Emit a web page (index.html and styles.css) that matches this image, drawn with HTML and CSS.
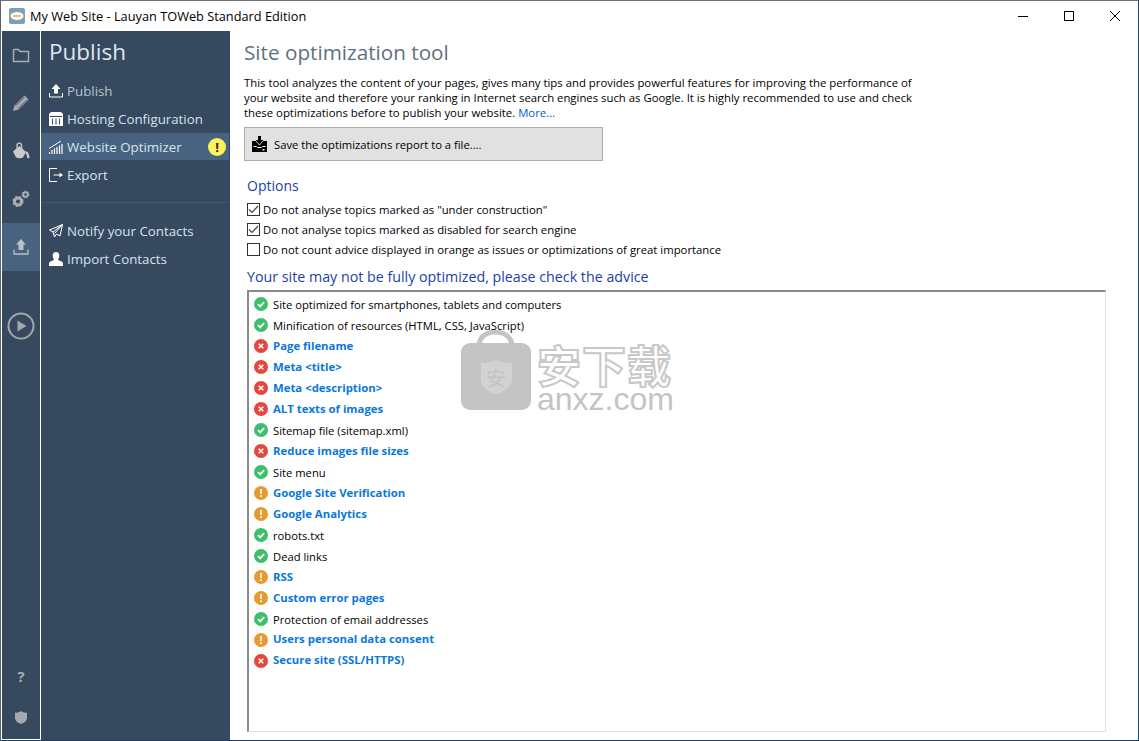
FILE: index.html
```html
<!DOCTYPE html>
<html>
<head>
	<meta charset="utf-8">
	<title>My Web Site - Lauyan TOWeb Standard Edition</title>
	<link rel="stylesheet" href="styles.css">
</head>
<body>
<div class="window">
	<div class="titlebar">
		<svg class="app-icon" width="16" height="16" viewBox="0 0 16 16"><rect width="16" height="16" rx="2" fill="#7d9fb5"/><ellipse cx="8" cy="8" rx="6.5" ry="4" fill="#fff"/><rect x="4" y="7" width="8" height="2" fill="#e8c25a"/></svg>
		<span class="title">My Web Site - Lauyan TOWeb Standard Edition</span>
		<div class="win-buttons">
			<svg width="12" height="12" viewBox="0 0 12 12"><path d="M1 6.5h10" stroke="#000" fill="none"/></svg>
			<svg width="12" height="12" viewBox="0 0 12 12"><rect x="1.5" y="1.5" width="9" height="9" stroke="#000" fill="none"/></svg>
			<svg width="12" height="12" viewBox="0 0 12 12"><path d="M1 1l10 10M11 1L1 11" stroke="#000" fill="none"/></svg>
		</div>
	</div>
	<div class="body">
		<div class="rail">
			<div class="rail-item">
				<svg width="18" height="16" viewBox="0 0 18 16"><path d="M1.5 3V14.500H16.500V4.500H8L6.500 2.500H2Z" fill="none" stroke="#a9adb2" stroke-width="1.500"/></svg>
			</div>
			<div class="rail-item">
				<svg width="18" height="18" viewBox="0 0 18 18"><path d="M1 17l1.500-5.500L12.500 1.500l4 4L6.500 15.500ZM3.500 12l2.500 2.500" fill="#a9adb2"/><path d="M3.500 12l9-9M6 14.500l9-9" stroke="#36495e" stroke-width=".8"/></svg>
			</div>
			<div class="rail-item">
				<svg width="18" height="18" viewBox="0 0 18 18"><path d="M1 9.500L7.500 4 14 10l-3 5.500c-2 1-5 1-7 0Z" fill="#c8cacc"/><path d="M5 6.500V3.500a2.300 2.300 0 0 1 4.600 0V8" fill="none" stroke="#c8cacc" stroke-width="1.300"/><path d="M14.500 9c2 1.500 3 4 3 6.500 0 1-2.500 1-2.500 0 0-2-.5-3-1.500-4.500Z" fill="#c8cacc"/></svg>
			</div>
			<div class="rail-item">
				<svg width="18" height="18" viewBox="0 0 18 18"><circle cx="6" cy="11.500" r="3.500" fill="none" stroke="#a9adb2" stroke-width="3"/><circle cx="6" cy="11.500" r="5" fill="none" stroke="#a9adb2" stroke-width="1.200" stroke-dasharray="2 2"/><circle cx="13.500" cy="4.500" r="2.300" fill="none" stroke="#a9adb2" stroke-width="2"/><circle cx="13.500" cy="4.500" r="3.500" fill="none" stroke="#a9adb2" stroke-width="1" stroke-dasharray="1.500 1.500"/></svg>
			</div>
			<div class="rail-item active">
				<svg width="16" height="16" viewBox="0 0 16 16"><path d="M8 0l5 5.500H10.500V11h-5V5.500H3Z" fill="#b9c0c7"/><path d="M1 10.500V15h14v-4.500" fill="none" stroke="#b9c0c7" stroke-width="1.300"/></svg>
			</div>
			<div class="rail-play">
				<svg width="28" height="28" viewBox="0 0 28 28"><circle cx="14" cy="14" r="12.500" fill="none" stroke="#a3a7ac" stroke-width="2"/><path d="M10.500 8.500v11l9-5.500Z" fill="#a3a7ac"/></svg>
			</div>
			<div class="rail-foot">
				<span class="help">?</span>
				<svg width="12" height="13" viewBox="0 0 12 13"><path d="M0 1.500c2 .5 4 0 6-1.500 2 1.500 4 2 6 1.500V7c0 3-3 5-6 6-3-1-6-3-6-6Z" fill="#a3a9af"/></svg>
			</div>
		</div>
		<div class="sidebar">
			<div class="side-title">Publish</div>
			<div class="side-item dim">
				<svg width="14" height="14" viewBox="0 0 14 14"><path d="M7 0l4.500 5H9v4.500H5V5H2.500Z" fill="#fff"/><path d="M.5 9v4h13V9" fill="none" stroke="#fff"/></svg>
				Publish
			</div>
			<div class="side-item">
				<svg width="14" height="14" viewBox="0 0 14 14"><path d="M2 0h10l2 2v12H0V2Z" fill="#fff"/><path d="M1 4.500h12M3.500 6.500v6M7 6.500v6M10.500 6.500v6" stroke="#36495e"/></svg>
				Hosting Configuration
			</div>
			<div class="side-item active">
				<svg width="14" height="14" viewBox="0 0 14 14"><path d="M.5 14v-2M3 14v-4M5.500 14V8.500M8 14V7M10.500 14V5.500M13 14V4" stroke="#fff" stroke-width="1.200" fill="none"/><path d="M0 8.500L8 3.500 12 1" stroke="#fff" fill="none"/></svg>
				Website Optimizer
				<span class="warn-badge">!</span>
			</div>
			<div class="side-item">
				<svg width="14" height="14" viewBox="0 0 14 14"><path d="M8 .5H.5v13H8M4.500 7H11" stroke="#fff" fill="none"/><path d="M10.500 4.500L14 7l-3.500 2.500Z" fill="#fff"/></svg>
				Export
			</div>
			<div class="side-sep"></div>
			<div class="side-item">
				<svg width="14" height="14" viewBox="0 0 14 14"><path d="M13.500.5L.5 6l3.500 2 1.500 5 2-3 3.500 2ZM4 8l9.500-7.500-8 9" stroke="#fff" fill="none"/></svg>
				Notify your Contacts
			</div>
			<div class="side-item">
				<svg width="14" height="14" viewBox="0 0 14 14"><path d="M7 0c2.200 0 3.300 1.700 3.300 3.800 0 1.500-.6 2.700-1.300 3.500 0 1 3 1.700 4.500 3 .5.500.5 2 .5 3.700H0c0-1.700 0-3.200.5-3.700C2 9 5 8.300 5 7.300c-.7-.8-1.300-2-1.300-3.500C3.700 1.700 4.800 0 7 0Z" fill="#fff"/></svg>
				Import Contacts
			</div>
		</div>
		<div class="main">
			<h1>Site optimization tool</h1>
			<p class="intro">This tool analyzes the content of your pages, gives many tips and provides powerful features for improving the performance of<br>your website and therefore your ranking in Internet search engines such as Google. It is highly recommended to use and check<br>these optimizations before to publish your website. <a>More...</a></p>
			<div class="save-btn">
				<svg width="15" height="16" viewBox="0 0 15 16"><path d="M0 5h3.500L7.500 9.500 11.500 5H15v11H0Z" fill="#000"/><path d="M6 0h3v4h2.500L7.500 8.500 3.500 4H6Z" fill="#000"/><path d="M1.500 10.500h3l1 1h4l1-1h3" stroke="#fff" fill="none"/><rect x="10.500" y="13" width="2" height="1.500" fill="#fff"/></svg>
				Save the optimizations report to a file....
			</div>
			<h2 class="options-head">Options</h2>
			<label class="check checked"><span class="box"><svg width="11" height="11" viewBox="0 0 11 11"><path d="M1 5.500l3 3L10 2" fill="none" stroke="#444" stroke-width="1.200"/></svg></span>Do not analyse topics marked as "under construction"</label>
			<label class="check checked"><span class="box"><svg width="11" height="11" viewBox="0 0 11 11"><path d="M1 5.500l3 3L10 2" fill="none" stroke="#444" stroke-width="1.200"/></svg></span>Do not analyse topics marked as disabled for search engine</label>
			<label class="check"><span class="box"></span>Do not count advice displayed in orange as issues or optimizations of great importance</label>
			<h2 class="advice-head">Your site may not be fully optimized, please check the advice</h2>
			<div class="advice-list" id="advice-list"></div>
		</div>
	</div>
	<div class="watermark">
		<svg width="70" height="80" viewBox="0 0 70 80"><path d="M18 16C18 7 25 2 34 2s17 5 17 14" fill="none" stroke="#c4c4c4" stroke-width="5"/><rect y="13" width="70" height="67" rx="9" fill="#c4c4c4"/><path d="M20 33c6 0 11-1 15-3 4 2 9 3 16 3v17c0 7-9 12-16 15-7-3-15-8-15-15Z" fill="#d2d2d2"/><text x="35" y="56" text-anchor="middle" font-size="20" font-family="Noto Sans CJK SC" fill="#c4c4c4">安</text></svg>
		<div class="wm-text">
			<div class="wm-cn">安下载</div>
			<div class="wm-en">anxz.com</div>
		</div>
	</div>
</div>
<script>
	// g = ok, r = error, o = warning
	var advice = [
		["g", "Site optimized for smartphones, tablets and computers"],
		["g", "Minification of resources (HTML, CSS, JavaScript)"],
		["r", "Page filename"],
		["r", "Meta <title>"],
		["r", "Meta <description>"],
		["r", "ALT texts of images"],
		["g", "Sitemap file (sitemap.xml)"],
		["r", "Reduce images file sizes"],
		["g", "Site menu"],
		["o", "Google Site Verification"],
		["o", "Google Analytics"],
		["g", "robots.txt"],
		["g", "Dead links"],
		["o", "RSS"],
		["o", "Custom error pages"],
		["g", "Protection of email addresses"],
		["o", "Users personal data consent"],
		["r", "Secure site (SSL/HTTPS)"]
	];
	var marks = {
		g: '<path d="M4 7.200l2.200 2.200L10.200 5" fill="none" stroke="#fff" stroke-width="1.800"/>',
		r: '<path d="M4.700 4.700l4.600 4.600M9.300 4.700l-4.600 4.600" fill="none" stroke="#fff" stroke-width="1.500"/>',
		o: '<path d="M7 3v5M7 9.300v1.700" fill="none" stroke="#fff" stroke-width="1.700"/>'
	};
	var $list = document.getElementById("advice-list");
	advice.forEach(function(entry) {
		var $row = document.createElement("div");
		$row.className = "advice advice-" + entry[0];
		$row.innerHTML = '<svg width="14" height="14" viewBox="0 0 14 14"><circle cx="7" cy="7" r="7"/>' + marks[entry[0]] + '</svg>';
		var $text = document.createElement("span");
		$text.textContent = entry[1];
		$row.appendChild($text);
		$list.appendChild($row);
	});
</script>
</body>
</html>
```

FILE: styles.css
```css
html, body { margin: 0; padding: 0; height: 100%; }
body { font: 11.300px "Open Sans", "Noto Sans", sans-serif; color: #000; background: #fff; overflow: hidden; }

.window { position: relative; display: flex; flex-direction: column; height: 741px; box-sizing: border-box; border: 1px solid #5c6670; border-top-color: #6b7177; border-bottom-color: #1f3d5c; border-right-color: #2b4560; }

.titlebar { display: flex; align-items: center; height: 30px; flex: none; padding-left: 8px; background: #fff; }
.app-icon { margin-right: 5px; }
.title { font-size: 12.780px; }
.win-buttons { display: flex; margin-left: auto; gap: 34px; padding-right: 17px; }

.body { display: flex; flex: 1; min-height: 0; }

.rail { display: flex; flex-direction: column; width: 38px; flex: none; margin-left: 1px; background: #36495e; border-right: 1px solid #fff; border-bottom: 1px solid #fff; }
.rail-item { display: flex; align-items: center; justify-content: center; height: 48px; }
.rail-item.active { background: #47637f; }
.rail-play { display: flex; justify-content: center; margin-top: 41px; }
.rail-foot { display: flex; flex-direction: column; align-items: center; gap: 26px; margin-top: auto; padding-bottom: 15px; }
.help { font-size: 15px; font-weight: bold; color: #a9adb2; line-height: 18px; }

.sidebar { width: 189px; flex: none; background: #36495e; color: #d5e3ee; }
.side-title { font-size: 22.500px; line-height: 32px; padding: 5px 0 9px 8px; color: #dce6ee; }
.side-item { display: flex; align-items: center; height: 28px; padding-left: 8px; font-size: 13.300px; box-sizing: border-box; }
.side-item svg { margin-right: 4px; flex: none; }
.side-item.dim { color: #b4c4d2; }
.side-item.active { background: #47637f; width: 188px; height: 27px; margin-bottom: 1px; }
.warn-badge { margin-left: auto; margin-right: 3px; width: 18px; height: 18px; border-radius: 50%; background: #fdf25a; color: #222; font-size: 13px; font-weight: bold; line-height: 18px; text-align: center; }
.side-sep { height: 1px; margin: 13px 0 14px; background: #45586d; }

.main { flex: 1; min-width: 0; padding: 6px 32px 0 14px; background: #fff; display: flex; flex-direction: column; }
h1 { margin: 0; font-size: 20.700px; font-weight: normal; line-height: 30px; color: #5f7080; }
.intro { margin: 8px 0 0; font-size: 11.350px; line-height: 15px; }
.intro a { color: #0a5bbd; }
.save-btn { display: flex; align-items: center; gap: 7px; width: 359px; height: 34px; margin-top: 7px; padding-left: 7px; box-sizing: border-box; background: #e1e1e1; border: 1px solid #adadad; font-size: 11.230px; }
h2 { margin: 0; font-weight: normal; color: #1a3fa8; }
.options-head { font-size: 14px; line-height: 20px; margin: 15px 0 3px 3px; }
.check { display: flex; align-items: center; height: 20px; margin-left: 3px; font-size: 11.330px; }
.box { display: flex; align-items: center; justify-content: center; width: 11px; height: 11px; margin-right: 3px; border: 1px solid #333; background: #fff; flex: none; }
.advice-head { font-size: 14.250px; line-height: 20px; margin: 8px 0 3px 3px; }

.advice-list { flex: 1; margin: 0 0 8px 3px; padding: 2px 0 0 5px; border: 1px solid #e0e0e0; border-top: 2px solid #8a8a8a; border-left: 2px solid #8a8a8a; }
.advice { display: flex; align-items: center; height: 20.970px; font-size: 11.230px; }
.advice svg { margin-right: 5px; flex: none; }
.advice-g svg { fill: #3dbf6b; }
.advice-r svg { fill: #e2483d; }
.advice-o svg { fill: #e89a30; }
.advice-r span, .advice-o span { color: #0a78dc; font-weight: bold; font-size: 11.360px; position: relative; top: -1px; }

/* watermark lies over the list */
.watermark { position: absolute; left: 460px; top: 329px; display: flex; gap: 6px; pointer-events: none; }
.wm-text { display: flex; flex-direction: column; padding-top: 11px; }
.wm-cn { font: bold 44px/46px "Noto Sans CJK SC", sans-serif; color: #fff; -webkit-text-stroke: 2px #c8c8c8; letter-spacing: 1px; }
.wm-en { font: 32px/24px "Liberation Sans", sans-serif; color: #c4c4c4; }
```
